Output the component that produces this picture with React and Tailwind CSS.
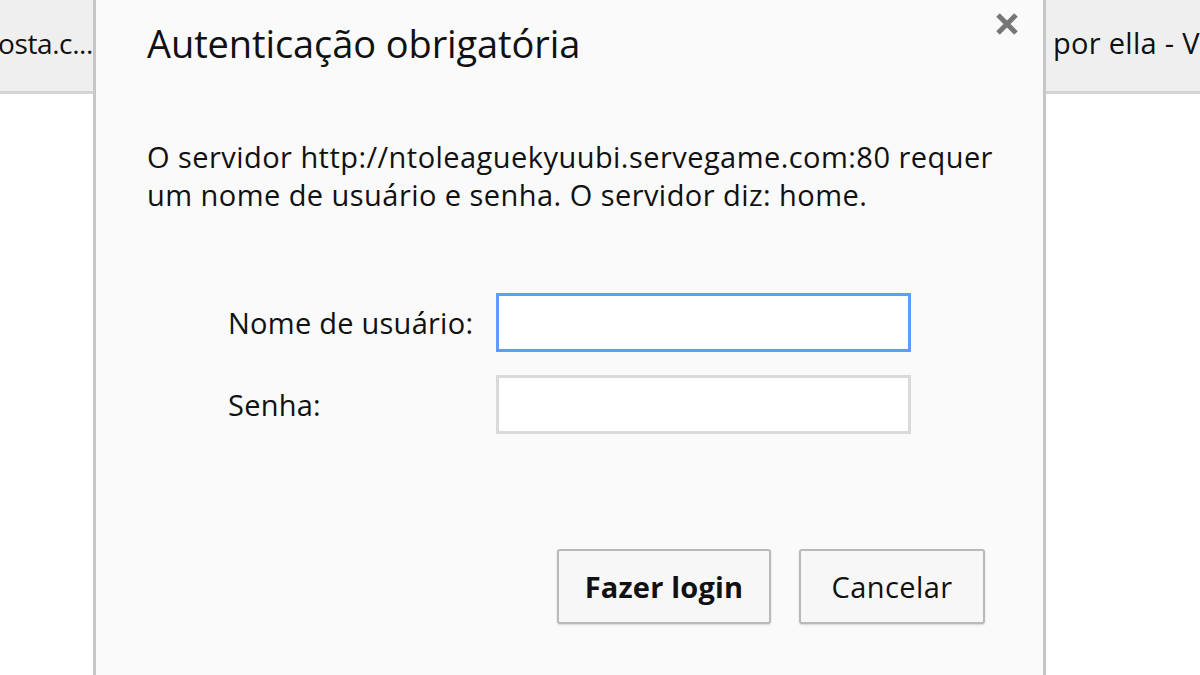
export default function App() {
  const font = { fontFamily: '"Open Sans", "Noto Sans", sans-serif' };
  return (
    <div
      className="relative h-[675px] w-[1200px] overflow-hidden bg-white text-[#111]"
      style={font}
    >
      {/* Tab strip behind the dialog */}
      <div className="flex h-[94px] items-center border-b-[3px] border-[#d4d4d4] bg-[#efefef] whitespace-nowrap">
        <div className="flex w-[93px] shrink-0 justify-end overflow-hidden pb-[6px]">
          <span className="text-[28px] tracking-[-0.4px]">osta.c...</span>
        </div>
        <div className="w-[960px] shrink-0" />
        <span className="pb-[6px] text-[29px] tracking-[0.3px]">por ella - V</span>
      </div>

      {/* Auth dialog */}
      <div className="absolute left-[93px] top-0 h-[700px] w-[953px] border-x-[3px] border-[#c6c6c6] bg-[#fafafa] pl-[51px] pr-[40px] pt-[20px]">
        <button className="absolute right-[24px] top-[12px] flex h-[24px] w-[24px] items-center justify-center">
          <svg width="22" height="22" viewBox="0 0 22 22">
            <path d="M2 2 L20 20 M20 2 L2 20" stroke="#777777" strokeWidth="5" strokeLinecap="butt" />
          </svg>
        </button>

        <h1 className="text-[38px] leading-[46px] font-normal tracking-[-0.1px]">
          Autenticação obrigatória
        </h1>

        <p className="mt-[72px] whitespace-nowrap text-[29px] leading-[38px] tracking-[0.45px]">
          O servidor http://ntoleaguekyuubi.servegame.com:80 requer
          <br />
          um nome de usuário e senha. O servidor diz: home.
        </p>

        <div className="ml-[81px] mt-[79px] flex flex-col gap-[23px]">
          <div className="flex items-center">
            <label className="w-[268px] whitespace-nowrap text-[29px] tracking-[0.25px]">Nome de usuário:</label>
            <input className="h-[59px] w-[415px] border-[3px] border-[#5e9dff] bg-white outline-none" />
          </div>
          <div className="flex items-center">
            <label className="w-[268px] text-[29px] tracking-[0.25px]">Senha:</label>
            <input
              type="password"
              className="h-[59px] w-[415px] border-[3px] border-[#dadada] bg-white outline-none"
            />
          </div>
        </div>

        <div className="mr-[18px] mt-[115px] flex justify-end gap-[28px]">
          <button className="h-[75px] w-[214px] rounded-[3px] border-2 border-[#b9b9b9] bg-[#f7f7f7] text-[29px] font-bold tracking-[0.2px] shadow-[0_1px_2px_rgba(0,0,0,0.15)]">
            Fazer login
          </button>
          <button className="h-[75px] w-[186px] rounded-[3px] border-2 border-[#b9b9b9] bg-[#f7f7f7] text-[29px] tracking-[0.4px] shadow-[0_1px_2px_rgba(0,0,0,0.15)]">
            Cancelar
          </button>
        </div>
      </div>
    </div>
  );
}
